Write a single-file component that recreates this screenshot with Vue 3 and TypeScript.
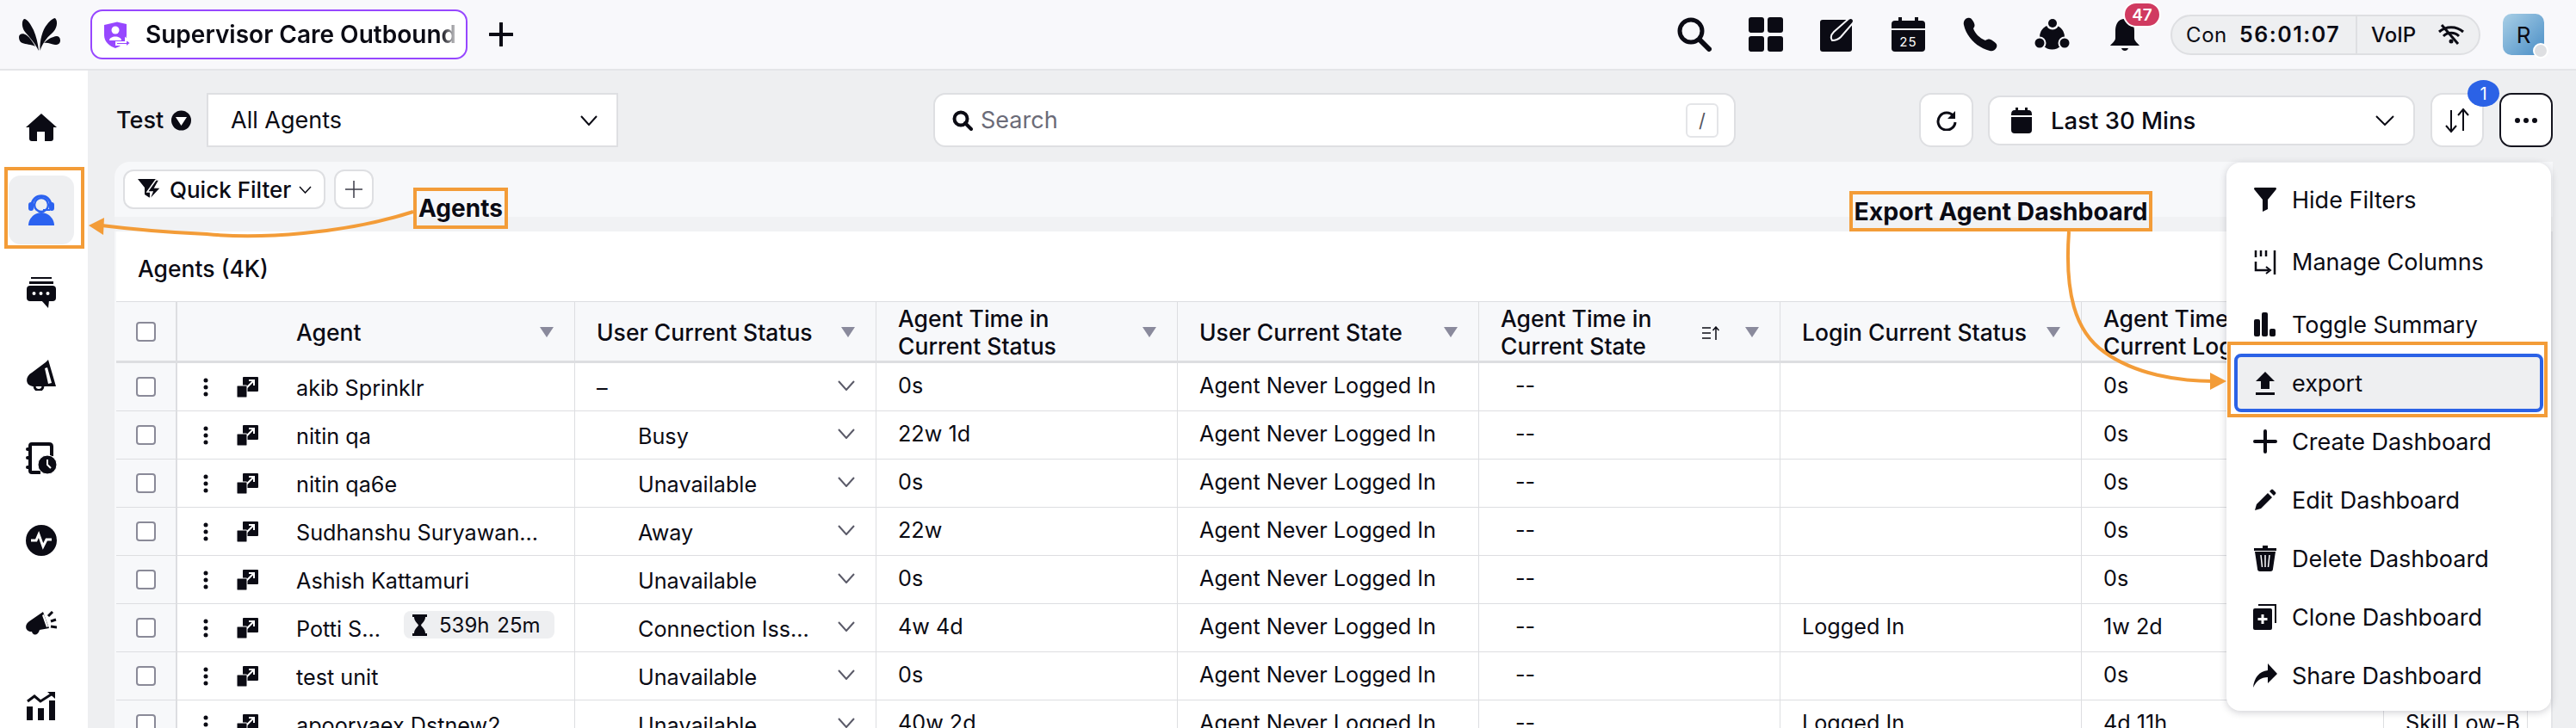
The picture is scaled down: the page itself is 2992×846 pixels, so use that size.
<script setup lang="ts">
interface Row {
  name: string
  badge?: string
  status: string
  time: string
  login: string
  logTime: string
  extra: string
}
const rows: Row[] = [
  { name: 'akib Sprinklr', status: '–', time: '0s', login: '', logTime: '0s', extra: '' },
  { name: 'nitin qa', status: 'Busy', time: '22w 1d', login: '', logTime: '0s', extra: '' },
  { name: 'nitin qa6e', status: 'Unavailable', time: '0s', login: '', logTime: '0s', extra: '' },
  { name: 'Sudhanshu Suryawan...', status: 'Away', time: '22w', login: '', logTime: '0s', extra: '' },
  { name: 'Ashish Kattamuri', status: 'Unavailable', time: '0s', login: '', logTime: '0s', extra: '' },
  { name: 'Potti S...', badge: '539h 25m', status: 'Connection Iss...', time: '4w 4d', login: 'Logged In', logTime: '1w 2d', extra: '' },
  { name: 'test unit', status: 'Unavailable', time: '0s', login: '', logTime: '0s', extra: '' },
  { name: 'apooryaex Dstnew2', status: 'Unavailable', time: '40w 2d', login: 'Logged In', logTime: '4d 11h', extra: 'Skill Low-B' },
]
const heads: { label: string[]; sort?: boolean }[] = [
  { label: ['Agent'] },
  { label: ['User Current Status'] },
  { label: ['Agent Time in', 'Current Status'] },
  { label: ['User Current State'] },
  { label: ['Agent Time in', 'Current State'], sort: true },
  { label: ['Login Current Status'] },
  { label: ['Agent Time in', 'Current Login Status'] },
]
</script>

<template>
  <div class="app">
    <header class="top">
      <svg class="logo" width="48" height="38" viewBox="0 0 48 38"><path d="M6 1C10 1 14 8 17 14C20 21 22 29 23 38C18 28 12 22 7 16C3 11 3 3 6 1Z"/><path d="M42 0C46 4 44 13 38 18C32 23 27 30 24.500 38C24 26 27 14 33 7C36 3 40 0 42 0Z"/><path d="M0 22C0 18 5 17 9 20C13 23 16 28 19 33C14 30 8 31 4 29C1 28 0 25 0 22Z"/><path d="M48 26C48 21 44 20 40 22C36 23 32 26 29 29C34 28 38 31 42 31C46 31 48 29 48 26Z"/></svg>
      <div class="tab">
        <svg width="32" height="31" viewBox="0 0 32 31"><path fill="#9747ff" d="M1 4L14 1Q16 0 18 1L27 3V16C27 24 20 29 14 31C8 29 1 24 1 16Z"/><circle cx="14" cy="10" r="4.500" fill="#fff"/><path fill="#fff" d="M7 22C7 16 21 16 21 22Z"/><path fill="#9747ff" stroke="#fff" stroke-width="2" d="M15 24H26V20L32 25L26 30V27H15Z"/></svg>
        <span class="tab-text">Supervisor Care Outbound</span>
      </div>
      <svg class="tab-add" width="28" height="28" viewBox="0 0 28 28"><path d="M14 1V27M1 14H27" stroke="#0b0b14" stroke-width="4" stroke-linecap="round"/></svg>
      <div class="top-icons">
        <svg width="40" height="40" viewBox="0 0 40 40"><circle cx="16" cy="16" r="13" fill="none" stroke="#0b0b14" stroke-width="5"/><path d="M26 26L37 37" stroke="#0b0b14" stroke-width="6" stroke-linecap="round"/></svg>
        <svg width="40" height="40" viewBox="0 0 40 40" fill="#0b0b14"><rect width="18" height="18" rx="3"/><rect x="22" width="18" height="18" rx="3"/><rect y="22" width="18" height="18" rx="3"/><rect x="22" y="22" width="18" height="18" rx="3"/></svg>
        <svg width="40" height="40" viewBox="0 0 40 40"><rect y="3" width="37" height="37" rx="3" fill="#0b0b14"/><path d="M33 2Q36 0 38 2Q40 4 38 7L24 23C20 27 16 27 14 27C12 24 13 20 16 17Z" fill="#0b0b14" stroke="#f8f8fb" stroke-width="2"/></svg>
        <svg width="39" height="40" viewBox="0 0 39 40" fill="#0b0b14"><rect x="8" width="4" height="6"/><rect x="27" width="4" height="6"/><path d="M0 13V8Q0 4 4 4H35Q39 4 39 8V13Z"/><path d="M0 15H39V36Q39 40 35 40H4Q0 40 0 36Z"/><text x="19.500" y="34" text-anchor="middle" class="cal">25</text></svg>
        <svg width="41" height="40" viewBox="0 0 41 40"><path fill="#0b0b14" d="M6 1C9 0 11 1 13 5C15 9 15 10 13 13C15 19 20 24 27 27C30 25 32 25 35 27C40 30 41 32 40 35C38 39 35 40 32 39C17 35 5 23 2 9C1 5 3 2 6 1Z"/></svg>
        <svg class="team" width="41" height="36" viewBox="0 0 41 36"><circle cx="20.500" cy="21" r="14.500" fill="#0b0b14"/><circle cx="21" cy="5" r="7.500" fill="#f8f8fb"/><circle cx="6" cy="28" r="7.500" fill="#f8f8fb"/><circle cx="35" cy="28" r="7.500" fill="#f8f8fb"/><circle cx="21" cy="5" r="5" fill="#0b0b14"/><circle cx="6" cy="28" r="5.500" fill="#0b0b14"/><circle cx="35" cy="28" r="5.500" fill="#0b0b14"/></svg>
        <div class="bell">
          <svg width="36" height="40" viewBox="0 0 36 40" fill="#0b0b14"><path d="M18 2C9 2 7 10 7 16V24C7 28 3 30 1 33H35C33 30 29 28 29 24V16C29 10 27 2 18 2Z"/><path d="M14 36H22C21 40 15 40 14 36Z"/></svg>
          <span class="bell-badge">47</span>
        </div>
      </div>
      <div class="conn">
        <span class="con">Con</span><b class="clock">56:01:07</b>
        <i class="conn-div"></i>
        <span class="voip">VoIP</span>
        <svg width="30" height="24" viewBox="0 0 30 24" fill="none" stroke="#0b0b14" stroke-width="3"><path d="M1 9C9 2 21 2 29 9"/><path d="M6 14C11 9 19 9 24 14"/><circle cx="15" cy="20" r="2.500" fill="#0b0b14" stroke="none"/><path d="M4 1L23 23"/></svg>
      </div>
      <div class="avatar">R<i class="avatar-dot"></i></div>
    </header>

    <div class="body">
      <nav class="side">
        <div class="side-item"><svg width="36" height="32" viewBox="0 0 36 32"><path fill="#0b0b14" d="M18 0L36 16H32V29Q32 32 29 32H22V21H13V32H7Q4 32 4 29V16H0Z"/></svg></div>
        <div class="side-item active"><svg width="32" height="36" viewBox="0 0 32 36" fill="none"><path d="M5 13C5 -2 27 -2 27 13" stroke="#2b62f0" stroke-width="3"/><circle cx="16" cy="12" r="8" stroke="#2b62f0" stroke-width="2.500"/><rect x="1" y="9" width="6" height="10" rx="3" fill="#2b62f0"/><rect x="25" y="9" width="6" height="10" rx="3" fill="#2b62f0"/><path d="M18 18H26" stroke="#2b62f0" stroke-width="2"/><path d="M1 36C1 28 8 21 16 21C24 21 31 28 31 36Z" fill="#2b62f0"/></svg></div>
        <div class="side-item"><svg width="34" height="36" viewBox="0 0 34 36" fill="#0b0b14"><rect x="5" width="24" height="2"/><rect x="3" y="5" width="28" height="3"/><rect y="10" width="34" height="18" rx="4"/><path d="M17 27H26L25 36Z"/><g fill="#fff"><circle cx="8.500" cy="19" r="2"/><circle cx="16.500" cy="19" r="2"/><circle cx="24.500" cy="19" r="2"/></g></svg></div>
        <div class="side-item"><svg width="34" height="36" viewBox="0 0 34 36"><path fill="#0b0b14" d="M25 0L34 31L29 31H7C-2 30 -2 19 6 15L22 3Z"/><path fill="#fff" d="M21 10L24 9L29 27L25 28Z"/><path d="M9 31C10 37 18 37 19 31" fill="none" stroke="#0b0b14" stroke-width="3"/></svg></div>
        <div class="side-item"><svg width="36" height="37" viewBox="0 0 36 37"><path d="M17 35H7Q5 35 5 33V4Q5 2 7 2H27Q30 2 30 5V16" fill="none" stroke="#0b0b14" stroke-width="4"/><g fill="#0b0b14"><rect y="6" width="6" height="4" rx="2"/><rect y="16" width="6" height="4" rx="2"/><rect y="27" width="6" height="4" rx="2"/></g><circle cx="25" cy="26" r="11" fill="#0b0b14" stroke="#fff" stroke-width="1"/><path d="M25 20V26L29 30" fill="none" stroke="#fff" stroke-width="2"/></svg></div>
        <div class="side-item"><svg width="36" height="36" viewBox="0 0 36 36"><circle cx="18" cy="18" r="18" fill="#0b0b14"/><path d="M6 18H12L15 11L20 25L24 17H30" fill="none" stroke="#fff" stroke-width="3"/></svg></div>
        <div class="side-item"><svg width="36" height="28" viewBox="0 0 36 28"><path fill="#0b0b14" d="M20 1L27 20L16 22C14 29 8 29 7 24C-1 24 -2 16 4 12Z"/><path fill="#fff" d="M19 5L21 4L26 18L24 19Z"/><path d="M26 6L31 1M29 12L35 10M29 18L36 19" stroke="#0b0b14" stroke-width="3"/></svg></div>
        <div class="side-item"><svg width="34" height="34" viewBox="0 0 34 34"><g fill="#0b0b14"><rect y="18" width="7" height="16"/><rect x="13" y="20" width="7" height="14"/><rect x="26" y="11" width="7" height="23"/></g><path d="M1 12L9 6L16 12L30 3" fill="none" stroke="#0b0b14" stroke-width="3"/><path fill="#0b0b14" d="M24 1H33V9Z"/></svg></div>
      </nav>

      <main class="main">
        <div class="toolbar">
          <div class="test">Test<svg width="23" height="24" viewBox="0 0 23 24"><circle cx="11.500" cy="12" r="11.500" fill="#0b0b14"/><path d="M5 8H18L11.500 18Z" fill="#fff"/></svg></div>
          <div class="select">All Agents<svg width="20" height="12" viewBox="0 0 20 12"><path d="M1 1L10 11L19 1" fill="none" stroke="#0b0b14" stroke-width="2"/></svg></div>
          <div class="search">
            <svg width="24" height="24" viewBox="0 0 24 24"><circle cx="10" cy="10" r="7.500" fill="none" stroke="#0b0b14" stroke-width="4"/><path d="M15 15L22 22" stroke="#0b0b14" stroke-width="4" stroke-linecap="round"/></svg>
            <span class="ph">Search</span>
            <span class="slash">/</span>
          </div>
          <div class="btn refresh"><svg width="24" height="24" viewBox="0 0 24 24"><path d="M20 7A10 10 0 1 0 22 14" fill="none" stroke="#0b0b14" stroke-width="3"/><path d="M22 1V10H13Z" fill="#0b0b14"/></svg></div>
          <div class="date">
            <svg width="24" height="30" viewBox="0 0 24 30" fill="#0b0b14"><rect x="5" width="3" height="4"/><rect x="16" width="3" height="4"/><path d="M0 8Q0 3 4 3H20Q24 3 24 8V9H0Z"/><path d="M0 11H24V26Q24 30 20 30H4Q0 30 0 26Z"/></svg>
            <span>Last 30 Mins</span>
            <svg class="date-chev" width="22" height="12" viewBox="0 0 22 12"><path d="M1 1L11 11L21 1" fill="none" stroke="#0b0b14" stroke-width="2"/></svg>
          </div>
          <div class="btn sort-btn">
            <svg width="28" height="30" viewBox="0 0 28 30" fill="none" stroke="#0b0b14" stroke-width="2"><path d="M7 3V28M1 21L7 28L13 21"/><path d="M21 27V2M15 9L21 2L27 9"/></svg>
            <span class="sort-badge">1</span>
          </div>
          <div class="btn more"><svg width="26" height="6" viewBox="0 0 26 6" fill="#0b0b14"><circle cx="3" cy="3" r="3"/><circle cx="13" cy="3" r="3"/><circle cx="23" cy="3" r="3"/></svg></div>
        </div>

        <section class="panel">
          <div class="filters">
            <div class="qf">
              <svg width="28" height="25" viewBox="0 0 28 25"><path fill="#0b0b14" d="M0 0H22L14 10V22L8 18V10Z"/><path fill="#0b0b14" stroke="#fff" stroke-width="1.500" d="M21 1L11 15H17L13 25L27 10H20L25 1Z"/></svg>
              <span>Quick Filter</span>
              <svg width="15" height="9" viewBox="0 0 15 9"><path d="M1 1L7.500 8L14 1" fill="none" stroke="#0b0b14" stroke-width="1.500"/></svg>
            </div>
            <div class="qf-add"><svg width="20" height="20" viewBox="0 0 20 20"><path d="M10 0V20M0 10H20" stroke="#3c3c48" stroke-width="1.500"/></svg></div>
          </div>
          <div class="band"></div>
          <div class="card">
            <div class="card-title">Agents (4K)</div>
            <div class="row head">
              <div class="cell chk"><i class="box"></i></div>
              <div v-for="(h, i) in heads" :key="i" class="cell hcell" :class="{ first: i === 0 }">
                <span class="hlabel"><span v-for="l in h.label" :key="l" class="hline">{{ l }}</span></span>
                <svg v-if="h.sort" class="sorticon" width="20" height="16" viewBox="0 0 20 16" fill="none" stroke="#0b0b14" stroke-width="1.500"><path d="M0 2H10M0 8H10M0 14H10M16 16V1M12.500 5L16 1L19.500 5"/></svg>
                <i class="tri"></i>
              </div>
              <div class="cell"></div>
              <div class="cell"></div>
            </div>
            <div v-for="r in rows" :key="r.name" class="row">
              <div class="cell chk"><i class="box"></i></div>
              <div class="cell agent">
                <svg class="dots" width="6" height="22" viewBox="0 0 6 22" fill="#0b0b14"><circle cx="3" cy="3" r="2.500"/><circle cx="3" cy="11" r="2.500"/><circle cx="3" cy="19" r="2.500"/></svg>
                <svg class="open" width="25" height="24" viewBox="0 0 25 24"><rect x="7" width="18" height="17" rx="1" fill="#0b0b14"/><path d="M11 13L20 4M14 4H20V10" fill="none" stroke="#fff" stroke-width="2"/><rect y="10" width="12" height="14" rx="1" fill="#0b0b14" stroke="#fff" stroke-width="1"/></svg>
                <span class="name">{{ r.name }}</span>
                <span v-if="r.badge" class="timer">
                  <svg width="17" height="25" viewBox="0 0 17 25" fill="#0b0b14"><path d="M0 0H17V3H15C15 8 11 10 10 12.500C11 15 15 17 15 22H17V25H0V22H2C2 17 6 15 7 12.500C6 10 2 8 2 3H0Z"/></svg>
                  {{ r.badge }}
                </span>
              </div>
              <div class="cell status">
                <span :class="r.status === '–' ? 'dash' : 'st'">{{ r.status }}</span>
                <svg class="cchev" width="20" height="12" viewBox="0 0 20 12"><path d="M1 1L10 11L19 1" fill="none" stroke="#5a5a68" stroke-width="2"/></svg>
              </div>
              <div class="cell up">{{ r.time }}</div>
              <div class="cell up">Agent Never Logged In</div>
              <div class="cell up dd">--</div>
              <div class="cell up">{{ r.login }}</div>
              <div class="cell up">{{ r.logTime }}</div>
              <div class="cell up xtra">{{ r.extra }}</div>
              <div class="cell"></div>
            </div>
          </div>
        </section>
      </main>
    </div>

    <ul class="menu">
      <li class="mi gap"><svg width="26" height="28" viewBox="0 0 26 28"><path fill="#0b0b14" d="M1 0H25Q27 1 25 3L16 14V25L10 28V14L1 3Q-1 1 1 0Z"/></svg>Hide Filters</li>
      <li class="mi gap"><svg width="26" height="28" viewBox="0 0 26 28" fill="none" stroke="#0b0b14" stroke-width="2.500"><path d="M2 0V8M8 0V7M14 0V7M24 0V28M2 13V23H17"/><path d="M14 19L19 23L14 27" stroke-width="2"/></svg>Manage Columns</li>
      <li class="mi"><svg width="26" height="28" viewBox="0 0 26 28" fill="#0b0b14"><rect y="8" width="7" height="20" rx="2"/><rect x="9" width="7" height="28" rx="2"/><rect x="18" y="19" width="7" height="9" rx="2"/></svg>Toggle Summary</li>
      <li class="mi sel"><svg width="26" height="27" viewBox="0 0 26 27" fill="#0b0b14"><path d="M13 0L24 11H18V20H8V11H2Z"/><rect x="2" y="24" width="22" height="3"/></svg>export</li>
      <li class="mi"><svg width="28" height="28" viewBox="0 0 28 28"><path d="M14 2V26M2 14H26" stroke="#0b0b14" stroke-width="4" stroke-linecap="round"/></svg>Create Dashboard</li>
      <li class="mi"><svg width="26" height="26" viewBox="0 0 26 26" fill="#0b0b14"><path d="M1 25L3 18L16 5L21 10L8 23Z"/><path d="M18 3L20 1Q21 0 22 1L25 4Q26 5 25 6L23 8Z"/></svg>Edit Dashboard</li>
      <li class="mi"><svg width="26" height="30" viewBox="0 0 26 30"><path fill="#0b0b14" d="M10 0H16V3H26V6H0V3H10Z"/><path fill="#0b0b14" d="M1 7H25L22 27Q22 30 19 30H7Q4 30 4 27Z"/><path d="M8 11L9.500 25M13 11V25M18 11L16.500 25" stroke="#fff" stroke-width="1.500"/></svg>Delete Dashboard</li>
      <li class="mi"><svg width="28" height="30" viewBox="0 0 28 30"><path d="M6 1H26V22" fill="none" stroke="#0b0b14" stroke-width="2"/><rect y="5" width="22" height="25" rx="2" fill="#0b0b14"/><path d="M11 12V23M5.500 17.500H16.500" stroke="#fff" stroke-width="3"/></svg>Clone Dashboard</li>
      <li class="mi"><svg width="28" height="28" viewBox="0 0 28 28"><path fill="#0b0b14" d="M17 0L28 12L17 23V16C9 16 4 20 0 28C1 17 7 9 17 8Z"/></svg>Share Dashboard</li>
    </ul>

    <svg class="arrows" width="2992" height="846" viewBox="0 0 2992 846" fill="none" stroke="#f39c38" stroke-width="4">
      <path d="M480 246C400 272 300 278 240 272C190 270 150 266 118 262"/>
      <path d="M103 262L121 253L120 273Z" fill="#f39c38" stroke="none"/>
      <path d="M2403 269C2398 340 2410 385 2444 409C2480 435 2530 443 2570 443"/>
      <path d="M2586 443L2567 433V453Z" fill="#f39c38" stroke="none"/>
    </svg>
    <div class="mark m-side"></div>
    <div class="mark m-agents">Agents</div>
    <div class="mark m-export">Export Agent Dashboard</div>
    <div class="mark m-item"></div>
  </div>
</template>

<style scoped>
* { box-sizing: border-box; }
.app {
  position: relative;
  width: 2992px;
  height: 846px;
  overflow: hidden;
  background: #eeeff1;
  color: #0b0b14;
  font-family: Inter, "Liberation Sans", sans-serif;
  font-size: 25.200px;
}
.top {
  height: 82px;
  display: flex;
  align-items: center;
  padding-left: 22px;
  background: #f8f8fb;
  border-bottom: 2px solid #e4e5e8;
}
.logo { fill: #0b0b14; flex: none; }
.tab {
  width: 438px;
  height: 58px;
  margin-left: 35px;
  display: flex;
  align-items: center;
  gap: 17px;
  padding-left: 13px;
  background: #fff;
  border: 2px solid #9747ff;
  border-radius: 14px;
}
.tab-text {
  width: 365px;
  overflow: hidden;
  white-space: nowrap;
  font-size: 28px;
  font-weight: 600;
  -webkit-mask-image: linear-gradient(90deg, #000 94%, transparent);
  mask-image: linear-gradient(90deg, #000 94%, transparent);
}
.tab-add { margin-left: 25px; }
.top-icons {
  margin-left: 1352px;
  display: flex;
  align-items: center;
  gap: 43px;
}
.cal { font: 400 15px Inter, sans-serif; fill: #fff; letter-spacing: 1px; }
.bell { position: relative; width: 36px; height: 40px; margin-left: 3px; }
.bell-badge {
  position: absolute;
  left: 16px;
  top: -18px;
  width: 44px;
  height: 30px;
  display: flex;
  align-items: center;
  justify-content: center;
  border: 2px solid #fff;
  border-radius: 15px;
  background: #d03a60;
  color: #fff;
  font-size: 19px;
  font-weight: 600;
}
.conn {
  width: 360px;
  height: 47px;
  margin-left: 35px;
  display: flex;
  align-items: center;
  background: #eeeff1;
  border: 2px solid #dedfe2;
  border-radius: 24px;
  padding-left: 16px;
  font-size: 24px;
}
.con { width: 62px; letter-spacing: .6px; }
.clock { width: 135px; font-weight: 600; font-size: 25px; letter-spacing: 1.500px; }
.conn-div { width: 2px; height: 45px; background: #dedfe2; }
.voip { width: 78px; margin-left: 16px; font-weight: 500; }
.avatar {
  position: relative;
  width: 48px;
  height: 48px;
  margin-left: 26px;
  display: flex;
  align-items: center;
  justify-content: center;
  border-radius: 10px;
  background: linear-gradient(135deg, #a9cfe6, #4a8ec6);
  font-size: 26px;
}
.avatar-dot {
  position: absolute;
  right: -5px;
  bottom: -4px;
  width: 18px;
  height: 18px;
  border-radius: 50%;
  background: #dedfe2;
  border: 2px solid #fff;
}
.body { display: flex; height: 764px; }
.side {
  width: 102px;
  flex: none;
  background: #fff;
}
.side-item {
  height: 96px;
  margin: 0 16px 0 10px;
  display: flex;
  align-items: center;
  justify-content: center;
}
.side-item:nth-child(1) { margin-top: 26px; height: 80px; }
.side-item:nth-child(2) { margin-top: 16px; height: 80px; }
.side-item:nth-child(3) { margin-top: 8px; }
.active { background: #eeeff1; border-radius: 14px; }
.main { flex: 1; min-width: 0; }
.toolbar {
  height: 106px;
  padding: 26px 0 0 33px;
  display: flex;
  align-items: flex-start;
}
.test {
  width: 88px;
  height: 63px;
  display: flex;
  align-items: center;
  gap: 9px;
  font-size: 27px;
  font-weight: 500;
}
.select {
  width: 478px;
  height: 63px;
  margin-left: 17px;
  padding: 0 22px 0 26px;
  display: flex;
  align-items: center;
  justify-content: space-between;
  background: #fff;
  border: 2px solid #dedfe2;
  font-size: 27px;
}
.search {
  width: 932px;
  height: 63px;
  margin-left: 366px;
  padding-left: 20px;
  display: flex;
  align-items: center;
  gap: 9px;
  background: #fff;
  border: 2px solid #dedfe2;
  border-radius: 14px;
}
.ph { color: #6b6b78; font-size: 27px; }
.slash {
  margin-left: auto;
  margin-right: 18px;
  width: 38px;
  height: 40px;
  display: flex;
  align-items: center;
  justify-content: center;
  border: 2px solid #e4e5e8;
  border-radius: 6px;
  font-size: 22px;
  color: #55555f;
}
.btn {
  position: relative;
  width: 62px;
  height: 63px;
  display: flex;
  align-items: center;
  justify-content: center;
  background: #fff;
  border: 2px solid #dedfe2;
  border-radius: 14px;
}
.refresh { width: 63px; margin-left: 213px; }
.date {
  width: 496px;
  height: 58px;
  margin: 3px 0 0 17px;
  padding: 0 22px 0 25px;
  display: flex;
  align-items: center;
  gap: 22px;
  background: #fff;
  border: 2px solid #dedfe2;
  border-radius: 14px;
  font-size: 27.500px;
  font-weight: 500;
}
.date-chev { margin-left: auto; }
.sort-btn { margin-left: 18px; }
.sort-badge {
  position: absolute;
  right: -20px;
  top: -17px;
  width: 37px;
  height: 31px;
  display: flex;
  align-items: center;
  justify-content: center;
  border-radius: 50%;
  background: #2b62e6;
  color: #fff;
  font-size: 20px;
}
.more { margin-left: 18px; border-color: #14141e; }
.panel {
  margin-left: 31px;
  width: 2832px;
  height: 658px;
  background: #f7f8fa;
  border-radius: 18px 0 0 0;
}
.filters {
  height: 64px;
  padding: 9px 0 0 10px;
  display: flex;
  gap: 10px;
}
.qf, .qf-add {
  height: 46px;
  display: flex;
  align-items: center;
  background: #fff;
  border: 2px solid #dedfe2;
  border-radius: 12px;
}
.qf { width: 235px; padding-left: 15px; gap: 9px; font-weight: 500; font-size: 26px; white-space: nowrap; }
.qf-add { width: 46px; justify-content: center; }
.band { height: 17px; background: #f1f2f4; }
.card {
  margin-left: 2px;
  background: #fff;
  height: 577px;
  border-right: 2px solid #e4e5e8;
  overflow: hidden;
}
.card-title {
  height: 81px;
  padding: 27px 0 0 25px;
  font-size: 26.500px;
  font-weight: 500;
  line-height: 32px;
}
.row {
  display: grid;
  grid-template-columns: 71px 462px 350px 350px 350px 350px 350px 351px 167px 29px;
  height: 56px;
  border-bottom: 1.500px solid #dddee1;
}
.head {
  height: 72px;
  background: #f7f8fa;
  border-top: 1.500px solid #dddee1;
  border-bottom: 3px solid #dddee1;
}
.cell {
  position: relative;
  display: flex;
  align-items: center;
  padding-left: 25px;
  border-right: 1px solid #dddee1;
  white-space: nowrap;
}
.row .cell:last-child { border-right: 0; }
.chk {
  padding-left: 23px;
  background: #f7f8fa;
  border-right: 2px solid #dddee1;
}
.box {
  width: 23px;
  height: 23px;
  background: #fff;
  border: 2px solid #8a8a98;
  border-radius: 4px;
}
.hcell { font-weight: 500; font-size: 26.500px; padding-right: 0; padding-top: 2px; }
.first { padding-left: 138px; }
.hlabel { display: flex; flex-direction: column; line-height: 32px; }
.hline { display: block; }
.tri {
  position: absolute;
  right: 24px;
  top: 29px;
  width: 0;
  height: 0;
  border-left: 8px solid transparent;
  border-right: 8px solid transparent;
  border-top: 12px solid #8a8a9c;
}
.sorticon { position: absolute; right: 70px; top: 28px; }
.agent { padding-left: 30px; }
.dots { flex: none; }
.open { flex: none; margin-left: 33px; }
.name { margin-left: 44px; padding-top: 2px; }
.timer {
  position: absolute;
  left: 263px;
  top: 8px;
  width: 175px;
  height: 32px;
  display: flex;
  align-items: center;
  gap: 14px;
  padding-left: 10px;
  border-radius: 8px;
  background: #eeeff1;
  font-size: 24px;
  word-spacing: 2px;
}
.status { justify-content: space-between; padding-right: 24px; }
.st { margin-left: 48px; padding-top: 2px; }
.dash { padding-top: 2px; }
.cchev { margin-bottom: 3px; }
.up { padding-bottom: 3px; }
.dd { padding-left: 42px; }
.menu {
  position: absolute;
  left: 2586px;
  top: 189px;
  width: 377px;
  height: 637px;
  margin: 0;
  padding: 9px 0 0;
  list-style: none;
  background: #fff;
  border-radius: 16px;
  box-shadow: 0 2px 8px rgba(40, 40, 60, .22);
  font-size: 27px;
}
.mi {
  height: 68px;
  display: flex;
  align-items: center;
  padding-left: 31px;
  white-space: nowrap;
}
.mi svg { width: 28px; margin-right: 17px; flex: none; }
.gap { margin-bottom: 4.500px; }
.sel {
  margin: 0 9px;
  padding-left: 18px;
  background: #eeeff1;
  border: 4px solid #2b62e6;
  border-radius: 8px;
}
.arrows { position: absolute; left: 0; top: 0; pointer-events: none; }
.mark {
  position: absolute;
  border: 4px solid #f39c38;
  display: flex;
  align-items: center;
  justify-content: center;
  font-weight: 700;
  font-size: 28px;
  white-space: nowrap;
}
.m-side { left: 5px; top: 194px; width: 93px; height: 95px; }
.m-agents { left: 480px; top: 218px; width: 110px; height: 48px; }
.m-export { left: 2148px; top: 222px; width: 352px; height: 47px; font-size: 28.500px; }
.m-item { left: 2587px; top: 397px; width: 372px; height: 88px; }
</style>
